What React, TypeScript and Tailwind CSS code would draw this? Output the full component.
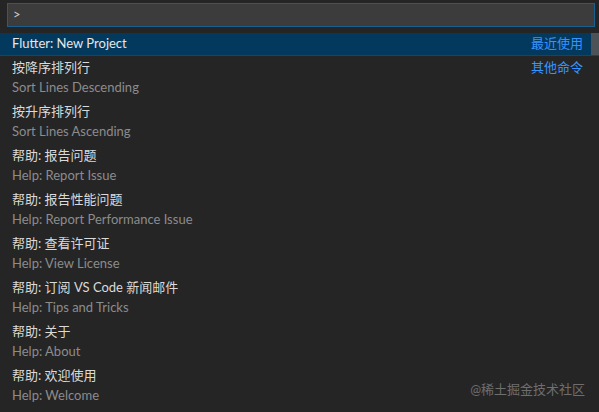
import React from "react";

const items = [
  { zh: "按降序排列行", en: "Sort Lines Descending", tag: "其他命令" },
  { zh: "按升序排列行", en: "Sort Lines Ascending" },
  { zh: "帮助: 报告问题", en: "Help: Report Issue" },
  { zh: "帮助: 报告性能问题", en: "Help: Report Performance Issue" },
  { zh: "帮助: 查看许可证", en: "Help: View License" },
  { zh: "帮助: 订阅 VS Code 新闻邮件", en: "Help: Tips and Tricks" },
  { zh: "帮助: 关于", en: "Help: About" },
  { zh: "帮助: 欢迎使用", en: "Help: Welcome" },
];

const App = () => {
  return (
    <div
      className="relative w-[599px] h-[412px] overflow-hidden bg-[#252526] text-[13px]"
      style={{ fontFamily: 'Lato, "Noto Sans CJK SC", sans-serif' }}
    >
      <div className="px-[7px] pt-[3px] pr-[4px]">
        <div className="h-[24px] border border-[#1b5f8f] bg-[#3c3c3c] pl-[5px] flex items-center text-[#cccccc] text-[13px]">
          &gt;
        </div>
      </div>

      <div className="mt-[6px] flex flex-col">
        <div className="h-[23px] flex items-center bg-[#04395e] border-b border-[#3a3a3a]">
          <span className="pl-[12px] text-[#e6e6e6] flex-1">Flutter: New Project</span>
          <span className="text-[#3794ff] mr-[8px]">最近使用</span>
          <div className="w-[8px] h-full bg-[#4d5257]" />
        </div>

        {items.map((it) => (
          <div key={it.en} className="h-[44px] flex pl-[12px] pr-[16px]">
            <div className="flex-1 flex flex-col">
              <div className="h-[22px] leading-[22px] text-[#dadada]">{it.zh}</div>
              <div className="h-[18px] leading-[18px] text-[#8c8c8c]">{it.en}</div>
            </div>
            {it.tag && (
              <div className="h-[22px] leading-[22px] text-[#3794ff]">{it.tag}</div>
            )}
          </div>
        ))}
      </div>

      <div className="absolute right-[14px] bottom-[13px] text-[13px] text-[#6e6e6e]">
        @稀土掘金技术社区
      </div>
    </div>
  );
};

export default App;
